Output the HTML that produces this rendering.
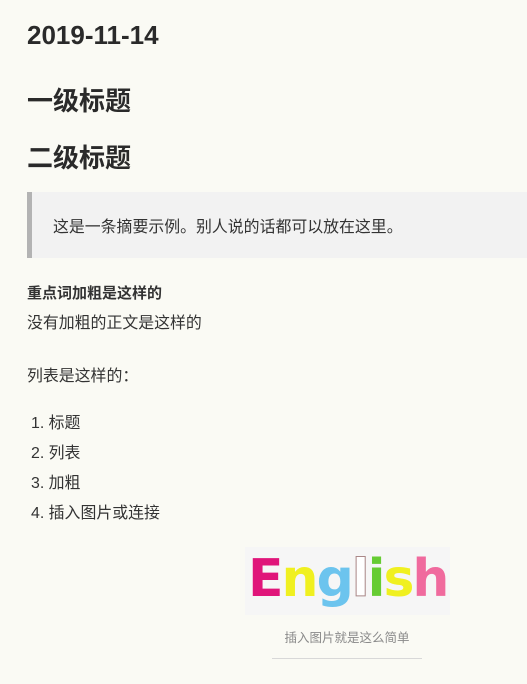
<!DOCTYPE html>
<html><head><meta charset="utf-8"><style>
body{margin:0;width:527px;height:684px;background:#fafaf4;font-family:"Liberation Sans","Noto Sans CJK SC",sans-serif;color:#333;position:relative;overflow:hidden}
.a{position:absolute;white-space:nowrap}
</style></head><body>
<div class="a" style="left:27px;top:20px;font-size:26px;font-weight:bold;color:#2a2a2a">2019-11-14</div>
<div class="a" style="left:27px;top:81px;font-size:26px;font-weight:bold;color:#2a2a2a">一级标题</div>
<div class="a" style="left:27px;top:138px;font-size:26px;font-weight:bold;color:#2a2a2a">二级标题</div>
<div class="a" style="left:27px;top:192px;width:495px;height:66px;background:#f2f2f2;border-left:5px solid #b3b3b3"></div>
<div class="a" style="left:53px;top:214px;font-size:15.9px;color:#333">这是一条摘要示例。别人说的话都可以放在这里。</div>
<div class="a" style="left:27px;top:282px;font-size:15px;font-weight:bold">重点词加粗是这样的</div>
<div class="a" style="left:27px;top:310px;font-size:15.9px">没有加粗的正文是这样的</div>
<div class="a" style="left:27px;top:363px;font-size:15.9px">列表是这样的：</div>
<div class="a" style="left:31px;top:409px;font-size:15.9px;line-height:30px">1. 标题<br>2. 列表<br>3. 加粗<br>4. 插入图片或连接</div>
<div class="a" style="left:245px;top:547px;width:205px;height:68px;background:#f6f6f6"></div>
<div class="a" style="left:248px;top:549px;font-size:52px;font-weight:bold;letter-spacing:-2px;font-family:'DejaVu Sans',sans-serif"><span style="color:#e0157a">E</span><span style="color:#f0f020">n</span><span style="color:#6cc4ee">g</span><span style="color:#fff;-webkit-text-stroke:1px #a88">l</span><span style="color:#6c3">i</span><span style="color:#f0f020">s</span><span style="color:#f06a9e">h</span></div>
<div class="a" style="left:0;width:694px;text-align:center;top:627px;font-size:12.5px;color:#8a8a8a">插入图片就是这么简单</div>
<div class="a" style="left:272px;top:658px;width:150px;height:1px;background:#d8d8d8"></div>
</body></html>
